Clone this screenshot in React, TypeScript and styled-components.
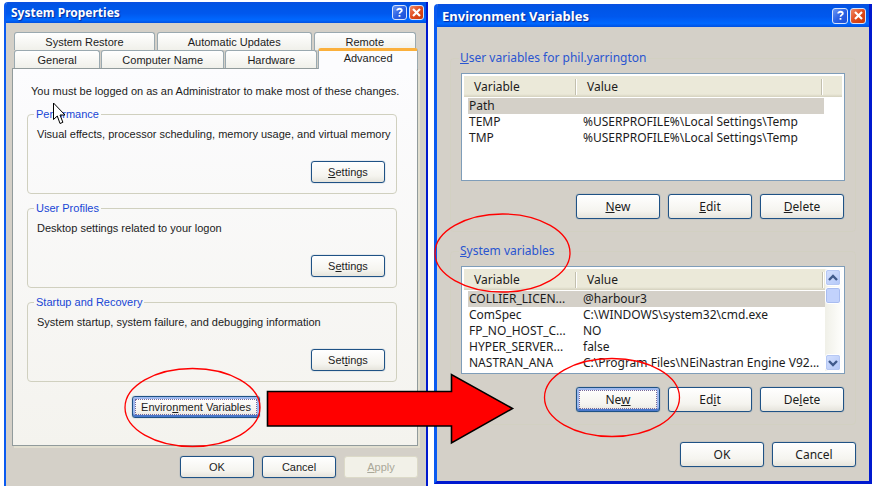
import React from "react";
import styled, { createGlobalStyle, css } from "styled-components";

const arialish = `"Liberation Sans", Arial, sans-serif`;
const tahomaish = `"Noto Sans", "Open Sans", Tahoma, sans-serif`;

const GlobalStyle = createGlobalStyle`
  * { box-sizing: border-box; }
  body { margin: 0; background: #fff; }
  button, table { font: inherit; color: inherit; }
`;

const Page = styled.main`
  position: relative;
  display: grid;
  grid-template-columns: 424fr 438fr;
  column-gap: 6px;
  align-items: start;
  padding: 2px 7px 4px 4px;
  color: #1c1c1c;
`;

const Dialog = styled.section<{ $family: string; $size: number }>`
  min-width: 0;
  font-family: ${(p) => p.$family};
  font-size: ${(p) => p.$size}px;
  line-height: 16px;
  background: #d4d0c8;
  border: 0 solid #0a5af0;
  border-right-color: #0019cf;
  border-bottom-color: #0019cf;
`;

const PropertiesDialog = styled(Dialog)`
  border-width: 0 2px;
  border-top-left-radius: 4px;
  overflow: hidden;
`;

const VariablesDialog = styled(Dialog)`
  margin-top: 2px;
  border-width: 0 3px 3px;
  border-top-left-radius: 4px;
  overflow: hidden;
`;

const CaptionButton = styled.button<{ $close?: boolean }>`
  display: grid;
  place-items: center;
  width: 15px;
  height: 15px;
  padding: 0;
  border: 1px solid #d8e4fc;
  border-radius: 3px;
  background: ${(p) =>
    p.$close
      ? "linear-gradient(135deg, #f08a68, #e04a1c 50%, #c83808)"
      : "linear-gradient(135deg, #6c98f4, #2c62e4 50%, #1c50d8)"};
`;

const Title = styled.h1`
  flex: 1;
  margin: 0;
  font: bold 12px/18px "Noto Sans", "Open Sans", sans-serif;
  color: #fff;
  text-shadow: 1px 1px 1px #0a2a9a;
  white-space: nowrap;
`;

const TitleBar = styled.header<{ $tall?: boolean }>`
  display: flex;
  align-items: center;
  gap: 2px;
  height: 21px;
  padding: 0 2px 0 5px;
  background: linear-gradient(#0a4fe0 0%, #0055e6 15%, #0058ee 55%, #0068ff 85%, #0050e0 100%);
  ${(p) =>
    p.$tall &&
    css`
      height: 23px;
      padding-right: 3px;
      ${Title} { font-size: 13px; }
      ${CaptionButton} { width: 16px; height: 16px; }
    `}
`;

const PropertiesBody = styled.div`
  padding: 9px 8px 8px 6px;
`;

const TabRow = styled.div<{ $front?: boolean }>`
  display: flex;
  align-items: flex-end;
  gap: ${(p) => (p.$front ? 1 : 2)}px;
  height: 18px;
  padding: 0 ${(p) => (p.$front ? 0 : 2)}px 0 2px;
`;

const Tab = styled.button<{ $grow: number; $selected?: boolean }>`
  flex: ${(p) => p.$grow} 1 0;
  min-width: 0;
  height: 18px;
  padding: 0;
  border: 1px solid #9aa9b0;
  border-bottom: 0;
  border-radius: 3px 3px 0 0;
  background: linear-gradient(#fff, #f0f0ea);
  line-height: 16px;
  white-space: nowrap;
  ${(p) =>
    p.$selected &&
    css`
      z-index: 1;
      height: 21px;
      margin-bottom: -1px;
      padding-bottom: 4px;
      border-top: 3px solid #fbb03c;
      background: #fcfcfe;
      line-height: 14px;
    `}
`;

const TabPanel = styled.div`
  padding: 14px 20px 27px 14px;
  border: 1px solid #919b9c;
  background: linear-gradient(#fcfcfe, #f4f3ee);
  box-shadow: 2px 2px 0 #e2dfd0;
`;

const Note = styled.p`
  margin: 0 0 8px;
  padding-left: 4px;
  white-space: nowrap;
`;

const OptionGroup = styled.fieldset`
  min-width: 0;
  margin: 0 0 7px;
  padding: 0 6px;
  border: 1px solid #d0d0bf;
  border-radius: 4px;
`;

const OptionLegend = styled.legend`
  padding: 0 2px;
  line-height: 14px;
  color: #1846d5;
`;

const OptionContent = styled.div`
  display: flex;
  flex-direction: column;
  gap: 19px;
  padding: 5px 5px 10px 3px;
`;

const Description = styled.p`
  margin: 0;
  white-space: nowrap;
`;

const PushButton = styled.button<{ $width: number; $tall?: boolean; $focused?: boolean }>`
  width: ${(p) => p.$width}px;
  height: ${(p) => (p.$tall ? 25 : 22)}px;
  padding: 0;
  border: 1px solid #1f5285;
  border-radius: 3px;
  background: linear-gradient(#fff, #f5f4ef 70%, #e6e4dc);
  box-shadow: 0 0 1px #3c6c9c;
  white-space: nowrap;
  ${(p) =>
    p.$focused &&
    css`
      box-shadow: inset 0 -2px 0 #4a78cc, inset 0 0 0 2px #9db8ee, 0 0 1px #3c6c9c;
      outline: 1px dotted #77679a;
      outline-offset: -4px;
    `}
  &:disabled {
    border-color: #dcdac8;
    background: #f2f1e8;
    box-shadow: none;
    color: #aaa898;
  }
`;

const SettingsButton = styled(PushButton)`
  align-self: flex-end;
`;

const EnvironmentRow = styled.div`
  display: flex;
  justify-content: flex-end;
  padding: 7px 137px 0 0;
`;

const DialogActions = styled.footer<{ $gapAbove: number }>`
  display: flex;
  justify-content: flex-end;
  gap: 8px;
  margin-top: ${(p) => p.$gapAbove}px;
`;

const VariablesBody = styled.div`
  padding: 22px 13px 14px;
`;

const VariableGroup = styled.fieldset`
  min-width: 0;
  margin: 0 0 10px;
  padding: 0 8px;
  border: 1px solid #d2d0c2;
  border-radius: 4px;
`;

const VariableLegend = styled.legend`
  padding: 0 1px;
  line-height: 18px;
  color: #2a55d0;
`;

const VariableContent = styled.div`
  display: flex;
  flex-direction: column;
  gap: 13px;
  padding: 6px 2px 12px;
`;

const ListBox = styled.div`
  display: flex;
  height: 108px;
  padding: 2px;
  border: 1px solid #7f9db9;
  background: #fff;
`;

const ListView = styled.div`
  flex: 1;
  min-width: 0;
  overflow: hidden;
  background: linear-gradient(#ebe9d9 0, #ebe9d9 18px, #d4d1be 21px, #fff 21px);
`;

const ListTable = styled.table<{ $scrolled?: boolean }>`
  width: ${(p) => (p.$scrolled ? "100%" : "calc(100% - 18px)")};
  table-layout: fixed;
  border-collapse: collapse;
  text-align: left;
  white-space: nowrap;
`;

const NameColumn = styled.col`
  width: 114px;
`;

const HeadCell = styled.th`
  height: 22px;
  padding: 0 2px 0 9px;
  font-weight: normal;
  &:first-child { padding-left: 10px; }
  & > span {
    display: block;
    border-right: 1px solid #c2bfae;
    line-height: 16px;
    box-shadow: 1px 0 0 #fff;
  }
`;

const Row = styled.tr<{ $selected?: boolean }>`
  background: ${(p) =>
    p.$selected ? "linear-gradient(90deg, transparent 4px, #d4d0c8 4px)" : "transparent"};
`;

const Cell = styled.td`
  height: 16px;
  padding: 0 0 0 5px;
  line-height: 16px;
  overflow: hidden;
`;

const ScrollBar = styled.div`
  display: flex;
  flex-direction: column;
  gap: 1px;
  width: 17px;
  background: linear-gradient(90deg, #f0f0e8, #fefefc);
`;

const ScrollButton = styled.button`
  display: grid;
  place-items: center;
  width: 16px;
  height: 17px;
  padding: 0;
  border: 1px solid #fff;
  border-radius: 3px;
  outline: 1px solid #b6c8f4;
  outline-offset: -2px;
  background: linear-gradient(135deg, #d4e0fe, #b4c8f8);
  &:last-child { margin-top: auto; }
`;

const ScrollThumb = styled.div`
  width: 16px;
  height: 17px;
  border: 1px solid #fff;
  border-radius: 3px;
  background: #c2d2fc;
  box-shadow: inset 0 0 0 1px #a8bcf0;
`;

const ListActions = styled.div`
  display: flex;
  justify-content: flex-end;
  gap: 8px;
  padding-right: 1px;
`;

const Annotations = styled.svg`
  position: absolute;
  inset: 0;
  width: 100%;
  height: auto;
  pointer-events: none;
`;

function CaptionButtons() {
  return (
    <>
      <CaptionButton type="button" aria-label="Help">
        <svg width="9" height="11" viewBox="0 0 9 11" fill="none" stroke="#fff" strokeWidth="1.8">
          <path d="M2.2 3.4C2.2 1.2 6.8 1.2 6.8 3.4C6.8 5 4.5 4.8 4.5 6.8" />
          <path d="M4.5 8V9.8" />
        </svg>
      </CaptionButton>
      <CaptionButton type="button" aria-label="Close" $close>
        <svg width="9" height="9" viewBox="0 0 9 9" stroke="#fff" strokeWidth="2.2">
          <path d="M1 1L8 8M8 1L1 8" />
        </svg>
      </CaptionButton>
    </>
  );
}

function Label({ text, accessKey }: { text: string; accessKey: number }) {
  return (
    <>
      {text.slice(0, accessKey)}
      <u>{text[accessKey]}</u>
      {text.slice(accessKey + 1)}
    </>
  );
}

const options = [
  { title: "Performance", text: "Visual effects, processor scheduling, memory usage, and virtual memory", key: 0 },
  { title: "User Profiles", text: "Desktop settings related to your logon", key: 1 },
  { title: "Startup and Recovery", text: "System startup, system failure, and debugging information", key: 3 },
];

const userVariables = [
  ["Path", ""],
  ["TEMP", "%USERPROFILE%\\Local Settings\\Temp"],
  ["TMP", "%USERPROFILE%\\Local Settings\\Temp"],
];

const systemVariables = [
  ["COLLIER_LICEN...", "@harbour3"],
  ["ComSpec", "C:\\WINDOWS\\system32\\cmd.exe"],
  ["FP_NO_HOST_C...", "NO"],
  ["HYPER_SERVER...", "false"],
  ["NASTRAN_ANA", "C:\\Program Files\\NEiNastran Engine V92..."],
];

function SystemProperties() {
  return (
    <PropertiesDialog $family={arialish} $size={11} aria-label="System Properties">
      <TitleBar>
        <Title>System Properties</Title>
        <CaptionButtons />
      </TitleBar>
      <PropertiesBody>
        <div role="tablist">
          <TabRow>
            <Tab role="tab" $grow={141}>System Restore</Tab>
            <Tab role="tab" $grow={155}>Automatic Updates</Tab>
            <Tab role="tab" $grow={102}>Remote</Tab>
          </TabRow>
          <TabRow $front>
            <Tab role="tab" $grow={86}>General</Tab>
            <Tab role="tab" $grow={124}>Computer Name</Tab>
            <Tab role="tab" $grow={92}>Hardware</Tab>
            <Tab role="tab" aria-selected $grow={100} $selected>Advanced</Tab>
          </TabRow>
        </div>
        <TabPanel role="tabpanel">
          <Note>You must be logged on as an Administrator to make most of these changes.</Note>
          {options.map((o) => (
            <OptionGroup key={o.title}>
              <OptionLegend>{o.title}</OptionLegend>
              <OptionContent>
                <Description>{o.text}</Description>
                <SettingsButton type="button" $width={74}>
                  <Label text="Settings" accessKey={o.key} />
                </SettingsButton>
              </OptionContent>
            </OptionGroup>
          ))}
          <EnvironmentRow>
            <PushButton type="button" $width={128} $focused>
              <Label text="Environment Variables" accessKey={6} />
            </PushButton>
          </EnvironmentRow>
        </TabPanel>
        <DialogActions $gapAbove={10}>
          <PushButton type="button" $width={74}>OK</PushButton>
          <PushButton type="button" $width={74}>Cancel</PushButton>
          <PushButton type="button" $width={74} disabled>
            <Label text="Apply" accessKey={0} />
          </PushButton>
        </DialogActions>
      </PropertiesBody>
    </PropertiesDialog>
  );
}

interface VariablesProps {
  title: string;
  rows: string[][];
  keys: [number, number, number];
  scrolled?: boolean;
  focused?: boolean;
}

function Variables({ title, rows, keys, scrolled, focused }: VariablesProps) {
  return (
    <VariableGroup>
      <VariableLegend>
        <Label text={title} accessKey={0} />
      </VariableLegend>
      <VariableContent>
        <ListBox>
          <ListView>
            <ListTable $scrolled={scrolled} aria-label={title}>
              <colgroup>
                <NameColumn />
                <col />
              </colgroup>
              <thead>
                <tr>
                  <HeadCell scope="col"><span>Variable</span></HeadCell>
                  <HeadCell scope="col"><span>Value</span></HeadCell>
                </tr>
              </thead>
              <tbody>
                {rows.map(([name, value], i) => (
                  <Row key={name} $selected={i === 0}>
                    <Cell>{name}</Cell>
                    <Cell>{value}</Cell>
                  </Row>
                ))}
              </tbody>
            </ListTable>
          </ListView>
          {scrolled && (
            <ScrollBar>
              <ScrollButton type="button" aria-label="Scroll up">
                <svg width="10" height="8" viewBox="0 0 10 8" fill="none" stroke="#405a8c" strokeWidth="2.4">
                  <path d="M1 6L5 2L9 6" />
                </svg>
              </ScrollButton>
              <ScrollThumb />
              <ScrollButton type="button" aria-label="Scroll down">
                <svg width="10" height="8" viewBox="0 0 10 8" fill="none" stroke="#405a8c" strokeWidth="2.4">
                  <path d="M1 2L5 6L9 2" />
                </svg>
              </ScrollButton>
            </ScrollBar>
          )}
        </ListBox>
        <ListActions>
          <PushButton type="button" $width={84} $tall $focused={focused}>
            <Label text="New" accessKey={keys[0]} />
          </PushButton>
          <PushButton type="button" $width={84} $tall>
            <Label text="Edit" accessKey={keys[1]} />
          </PushButton>
          <PushButton type="button" $width={84} $tall>
            <Label text="Delete" accessKey={keys[2]} />
          </PushButton>
        </ListActions>
      </VariableContent>
    </VariableGroup>
  );
}

function EnvironmentVariables() {
  return (
    <VariablesDialog $family={tahomaish} $size={12} aria-label="Environment Variables">
      <TitleBar $tall>
        <Title>Environment Variables</Title>
        <CaptionButtons />
      </TitleBar>
      <VariablesBody>
        <Variables title="User variables for phil.yarrington" rows={userVariables} keys={[0, 0, 0]} />
        <Variables title="System variables" rows={systemVariables} keys={[2, 2, 2]} scrolled focused />
        <DialogActions $gapAbove={17}>
          <PushButton type="button" $width={84} $tall>OK</PushButton>
          <PushButton type="button" $width={84} $tall>Cancel</PushButton>
        </DialogActions>
      </VariablesBody>
    </VariablesDialog>
  );
}

export default function App() {
  return (
    <>
      <GlobalStyle />
      <Page>
        <SystemProperties />
        <EnvironmentVariables />
        <Annotations viewBox="0 0 879 490" aria-hidden="true">
          <g fill="none" stroke="#f00" strokeWidth="1.3">
            <ellipse cx="192.5" cy="407.5" rx="67.5" ry="39" />
            <ellipse cx="502.5" cy="253" rx="67.5" ry="39" />
            <ellipse cx="612" cy="397.5" rx="67.5" ry="39" />
          </g>
          <path
            d="M267.5 391.5H451.5V374.5L512.5 408.5L451.5 443V426H267.5Z"
            fill="#f00"
            stroke="#000"
            strokeWidth="1.6"
          />
          <path
            d="M53.5 103V119.5L57.3 116L60 123.5L62.9 122.3L60 115H65Z"
            fill="#fff"
            stroke="#000"
            strokeWidth="1"
          />
        </Annotations>
      </Page>
    </>
  );
}
